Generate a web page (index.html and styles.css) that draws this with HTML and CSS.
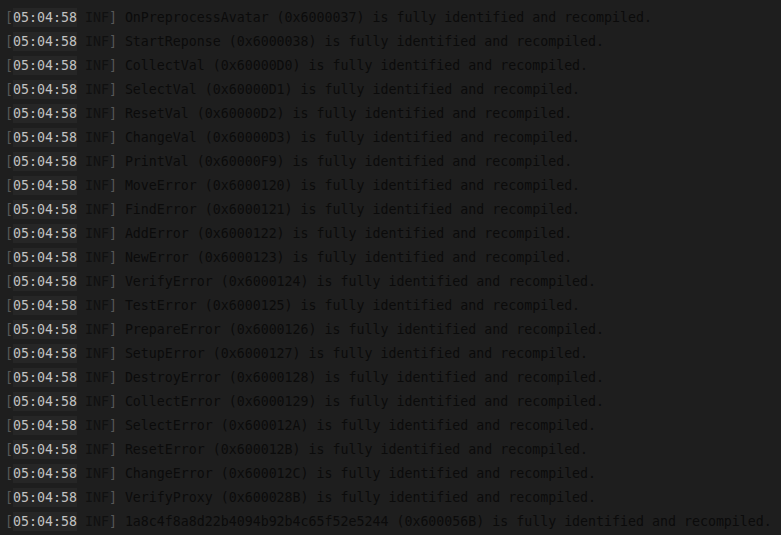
FILE: index.html
```html
<!DOCTYPE html>
<html>
<head>
<meta charset="utf-8">
<link rel="stylesheet" href="styles.css">
</head>
<body>
<div class="log">
<div class="row"><span class="br">[</span><span class="ts">05:04:58</span> <span class="lvl">INF</span><span class="br">]</span> <span class="msg">OnPreprocessAvatar (0x6000037) is fully identified and recompiled.</span></div>
<div class="row"><span class="br">[</span><span class="ts">05:04:58</span> <span class="lvl">INF</span><span class="br">]</span> <span class="msg">StartReponse (0x6000038) is fully identified and recompiled.</span></div>
<div class="row"><span class="br">[</span><span class="ts">05:04:58</span> <span class="lvl">INF</span><span class="br">]</span> <span class="msg">CollectVal (0x60000D0) is fully identified and recompiled.</span></div>
<div class="row"><span class="br">[</span><span class="ts">05:04:58</span> <span class="lvl">INF</span><span class="br">]</span> <span class="msg">SelectVal (0x60000D1) is fully identified and recompiled.</span></div>
<div class="row"><span class="br">[</span><span class="ts">05:04:58</span> <span class="lvl">INF</span><span class="br">]</span> <span class="msg">ResetVal (0x60000D2) is fully identified and recompiled.</span></div>
<div class="row"><span class="br">[</span><span class="ts">05:04:58</span> <span class="lvl">INF</span><span class="br">]</span> <span class="msg">ChangeVal (0x60000D3) is fully identified and recompiled.</span></div>
<div class="row"><span class="br">[</span><span class="ts">05:04:58</span> <span class="lvl">INF</span><span class="br">]</span> <span class="msg">PrintVal (0x60000F9) is fully identified and recompiled.</span></div>
<div class="row"><span class="br">[</span><span class="ts">05:04:58</span> <span class="lvl">INF</span><span class="br">]</span> <span class="msg">MoveError (0x6000120) is fully identified and recompiled.</span></div>
<div class="row"><span class="br">[</span><span class="ts">05:04:58</span> <span class="lvl">INF</span><span class="br">]</span> <span class="msg">FindError (0x6000121) is fully identified and recompiled.</span></div>
<div class="row"><span class="br">[</span><span class="ts">05:04:58</span> <span class="lvl">INF</span><span class="br">]</span> <span class="msg">AddError (0x6000122) is fully identified and recompiled.</span></div>
<div class="row"><span class="br">[</span><span class="ts">05:04:58</span> <span class="lvl">INF</span><span class="br">]</span> <span class="msg">NewError (0x6000123) is fully identified and recompiled.</span></div>
<div class="row"><span class="br">[</span><span class="ts">05:04:58</span> <span class="lvl">INF</span><span class="br">]</span> <span class="msg">VerifyError (0x6000124) is fully identified and recompiled.</span></div>
<div class="row"><span class="br">[</span><span class="ts">05:04:58</span> <span class="lvl">INF</span><span class="br">]</span> <span class="msg">TestError (0x6000125) is fully identified and recompiled.</span></div>
<div class="row"><span class="br">[</span><span class="ts">05:04:58</span> <span class="lvl">INF</span><span class="br">]</span> <span class="msg">PrepareError (0x6000126) is fully identified and recompiled.</span></div>
<div class="row"><span class="br">[</span><span class="ts">05:04:58</span> <span class="lvl">INF</span><span class="br">]</span> <span class="msg">SetupError (0x6000127) is fully identified and recompiled.</span></div>
<div class="row"><span class="br">[</span><span class="ts">05:04:58</span> <span class="lvl">INF</span><span class="br">]</span> <span class="msg">DestroyError (0x6000128) is fully identified and recompiled.</span></div>
<div class="row"><span class="br">[</span><span class="ts">05:04:58</span> <span class="lvl">INF</span><span class="br">]</span> <span class="msg">CollectError (0x6000129) is fully identified and recompiled.</span></div>
<div class="row"><span class="br">[</span><span class="ts">05:04:58</span> <span class="lvl">INF</span><span class="br">]</span> <span class="msg">SelectError (0x600012A) is fully identified and recompiled.</span></div>
<div class="row"><span class="br">[</span><span class="ts">05:04:58</span> <span class="lvl">INF</span><span class="br">]</span> <span class="msg">ResetError (0x600012B) is fully identified and recompiled.</span></div>
<div class="row"><span class="br">[</span><span class="ts">05:04:58</span> <span class="lvl">INF</span><span class="br">]</span> <span class="msg">ChangeError (0x600012C) is fully identified and recompiled.</span></div>
<div class="row"><span class="br">[</span><span class="ts">05:04:58</span> <span class="lvl">INF</span><span class="br">]</span> <span class="msg">VerifyProxy (0x600028B) is fully identified and recompiled.</span></div>
<div class="row"><span class="br">[</span><span class="ts">05:04:58</span> <span class="lvl">INF</span><span class="br">]</span> <span class="msg">1a8c4f8a8d22b4094b92b4c65f52e5244 (0x600056B) is fully identified and recompiled.</span></div>
</div>
</body>
</html>
```
FILE: styles.css
```css
html, body {
  margin: 0;
  padding: 0;
  background: #1e1e1e;
  width: 781px;
  height: 535px;
  overflow: hidden;
}
.log {
  padding: 6px 0 0 5px;
  font-family: "DejaVu Sans Mono", "Liberation Mono", monospace;
  font-size: 13.28px;
  color: #0d0d0d;
}
.row {
  height: 24px;
  line-height: 24px;
  white-space: pre;
}
.br {
  color: #585858;
}
.ts {
  color: #c2c2c2;
  background: #262626;
  padding: 2px 0;
}
.lvl {
  color: #101010;
}
.msg {
  color: #0b0b0b;
}
```
